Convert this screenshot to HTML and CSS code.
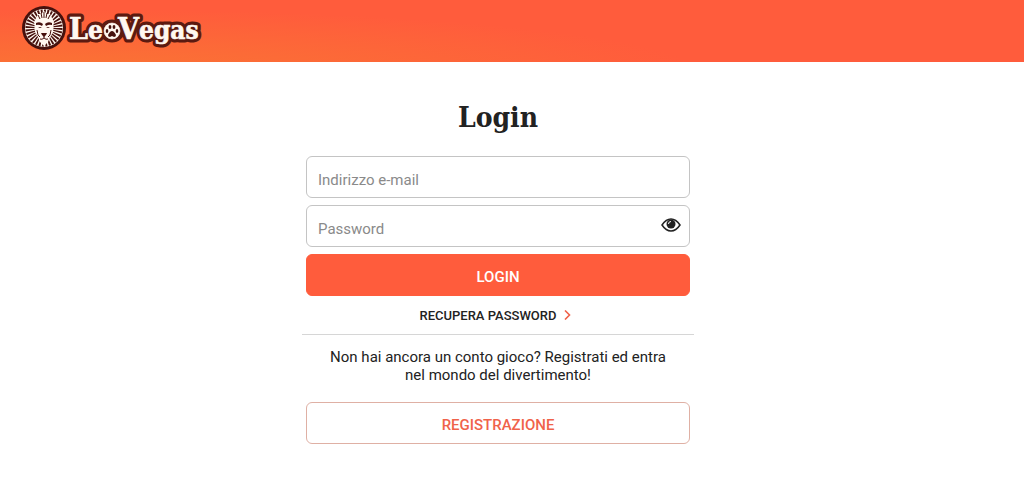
FILE: index.html
```html
<!DOCTYPE html>
<html lang="it">
<head>
    <meta charset="UTF-8">
    <meta name="viewport" content="width=device-width, initial-scale=1.0">
    <title>Login - LeoVegas</title>
    <link rel="stylesheet" href="styles.css">
</head>
<body>
    <header class="site-header">
        <a class="logo" href="#" aria-label="LeoVegas">
            <svg width="184" height="48" viewBox="0 0 184 48">
                <!-- Lion badge -->
                <circle cx="24" cy="24" r="22" fill="#46110d"/>
                <circle cx="24" cy="24" r="19" fill="#fff8f0"/>
                <circle class="rays" cx="24" cy="24" r="14" pathLength="72"/>
                <path d="M24 7l3 3 3 0 2 4 2 4-1 5 0 5-3 5-2 5-4 4-4-4-2-5-3-5 0-5-1-5 2-4 2-4 3 0z" fill="#fff8f0"/>
                <path d="M24 8v6M21 9l1 5M27 9l-1 5M18 11l2 4M30 11l-2 4" class="mane"/>
                <path d="M16 19q4-2 7 1l-1 2q-3-2-6-1zM32 19q-4-2-7 1l1 2q3-2 6-1z" fill="#46110d"/>
                <path d="M18 23h4l-2 1zM30 23h-4l2 1z" fill="#46110d"/>
                <path d="M17 26l1 5 2 2M31 26l-1 5-2 2" class="mane"/>
                <path d="M21 29h6l-1 2-2 2-2-2z" fill="#46110d"/>
                <path d="M24 32v2M20 35q2 1 4-1 2 2 4 1" class="mane"/>
                <!-- Wordmark -->
                <g class="wordmark wordmark-edge">
                    <text x="49" y="35" class="initial">L</text>
                    <text x="68" y="35">e</text>
                    <text x="98" y="35" class="initial">V</text>
                    <text x="119" y="35">egas</text>
                    <ellipse cx="92" cy="27" rx="9" ry="8"/>
                </g>
                <g class="wordmark wordmark-face">
                    <text x="49" y="35" class="initial">L</text>
                    <text x="68" y="35">e</text>
                    <ellipse cx="92" cy="27" rx="8" ry="8"/>
                    <text x="98" y="35" class="initial">V</text>
                    <text x="119" y="35">egas</text>
                </g>
                <g fill="#46110d">
                    <path d="M92 27q2 0 4 4 0 2-2 2l-2-1-2 1q-2 0-2-2 2-4 4-4z"/>
                    <ellipse cx="87" cy="27" rx="1.3" ry="2"/>
                    <ellipse cx="90" cy="23" rx="1.4" ry="2.1"/>
                    <ellipse cx="94" cy="23" rx="1.4" ry="2.1"/>
                    <ellipse cx="97" cy="27" rx="1.3" ry="2"/>
                </g>
            </svg>
        </a>
    </header>

    <main class="login-page">
        <h1>Login</h1>

        <form class="login-form">
            <input class="field" type="email" placeholder="Indirizzo e-mail" aria-label="Indirizzo e-mail">
            <div class="password-row">
                <input class="field" type="password" placeholder="Password" aria-label="Password">
                <button class="show-password" type="button" aria-label="Mostra password">
                    <svg width="20" height="14" viewBox="0 0 20 14">
                        <path d="M1 7q4-6 9-6t9 6q-4 6-9 6T1 7z" fill="#fff" stroke="#222" stroke-width="1.5"/>
                        <circle cx="10" cy="6" r="4.5" fill="#222"/>
                        <path d="M7.5 6q0-2.5 2.5-2.5" fill="none" stroke="#fff"/>
                    </svg>
                </button>
            </div>
            <button class="btn btn-primary" type="submit">LOGIN</button>
        </form>

        <a class="recover-link" href="#">
            RECUPERA PASSWORD
            <svg width="7" height="10" viewBox="0 0 7 10">
                <path d="M1 0.5L5.5 5L1 9.5" fill="none" stroke="#f0624a" stroke-width="1.6"/>
            </svg>
        </a>

        <section class="register">
            <p>Non hai ancora un conto gioco? Registrati ed entra nel mondo del divertimento!</p>
            <button class="btn btn-outline" type="button">REGISTRAZIONE</button>
        </section>
    </main>
</body>
</html>
```
FILE: styles.css
```css
:root {
    --primary-color: #ff5c3c;
    --text-color: #222;
    --logo-dark: #46110d;
}

* {
    box-sizing: border-box;
}

body {
    margin: 0;
    font-family: Roboto, sans-serif;
    font-size: 15px;
    color: var(--text-color);
    background: #fff;
}

.site-header {
    padding: 4px 20px 10px;
    background: radial-gradient(ellipse 60% 100% at 8% 115%, #fa7434, var(--primary-color));
}

.logo {
    display: block;
}

.logo svg {
    display: block;
}

.rays {
    fill: none;
    stroke: var(--logo-dark);
    stroke-width: 9;
    stroke-dasharray: 1.3 0.95;
}

.mane {
    fill: none;
    stroke: var(--logo-dark);
}

.wordmark {
    font-family: "DejaVu Serif Condensed", "DejaVu Serif", serif;
    font-size: 26px;
    font-weight: bold;
    fill: #fff8f0;
}

.wordmark .initial {
    font-size: 30px;
}

.wordmark-face {
    stroke: #fff8f0;
    stroke-width: 0.6;
}

.wordmark-edge {
    fill: #5c1a10;
    stroke: #5c1a10;
    stroke-width: 7;
    stroke-linejoin: round;
}

.login-page {
    max-width: 420px;
    margin: 0 auto;
    padding: 37px 28px 40px 0;
    text-align: center;
}

h1 {
    margin: 0 0 19px;
    font-family: "DejaVu Serif Condensed", "DejaVu Serif", serif;
    font-size: 28px;
    line-height: 38px;
}

.login-form {
    display: flex;
    flex-direction: column;
    gap: 7px;
    padding: 0 4px;
}

.field {
    width: 100%;
    height: 42px;
    padding: 5px 11px 0;
    border: 1px solid #c4c4c4;
    border-radius: 6px;
    font: inherit;
    color: var(--text-color);
}

.field::placeholder {
    color: #8a8a8a;
}

.password-row {
    position: relative;
    display: flex;
}

.show-password {
    position: absolute;
    top: 13px;
    right: 9px;
    padding: 0;
    border: none;
    background: none;
    cursor: pointer;
}

.show-password svg {
    display: block;
}

.btn {
    width: 100%;
    height: 42px;
    padding: 4px 0 0;
    border: 1px solid var(--primary-color);
    border-radius: 6px;
    font: inherit;
    font-weight: 500;
    cursor: pointer;
}

.btn-primary {
    background: var(--primary-color);
    color: #fff;
}

.btn-outline {
    border-color: #dfb0a4;
    background: #fff;
    color: #f0624a;
}

.recover-link {
    display: flex;
    align-items: center;
    justify-content: center;
    gap: 8px;
    height: 38px;
    padding-right: 5px;
    font-size: 13px;
    font-weight: 500;
    color: var(--text-color);
    text-decoration: none;
}

.register {
    padding: 13px 4px 0;
    border-top: 1px solid #d6d6d6;
}

.register p {
    margin: 0 20px 18px;
    line-height: 18px;
}
```
